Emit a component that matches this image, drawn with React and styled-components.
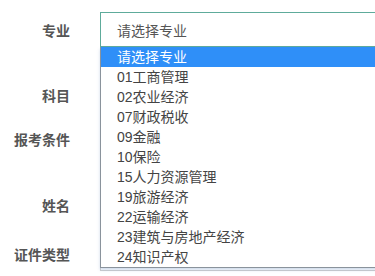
import styled, { createGlobalStyle } from "styled-components";

const GlobalStyle = createGlobalStyle`
  body {
    margin: 0;
    background: #fff;
    font-family: "Liberation Sans", "Noto Sans CJK SC", sans-serif;
  }
`;

const Form = styled.div`
  position: relative;
  width: 375px;
  height: 276px;
  overflow: hidden;
  padding-top: 12px;
  box-sizing: border-box;
`;

const Row = styled.div`
  display: flex;
  align-items: center;
  height: 35px;
  margin-top: ${(p) => p.$gap || 0}px;
`;

const Label = styled.div`
  width: 70px;
  padding-right: 30px;
  text-align: right;
  font-size: 14px;
  font-weight: bold;
  color: #555;
  flex-shrink: 0;
`;

const Field = styled.div`
  position: relative;
  flex: 1;
  height: 35px;
`;

const SelectBox = styled.div`
  height: 35px;
  width: 300px;
  box-sizing: border-box;
  border: 1px solid #5eab9b;
  display: flex;
  align-items: center;
  padding-left: 16px;
  font-size: 14px;
  color: #555;
`;

const Input = styled.div`
  height: 35px;
  width: 300px;
  box-sizing: border-box;
  border: 1px solid #ccc;
`;

const Menu = styled.ul`
  position: absolute;
  top: 35px;
  left: 0;
  width: 300px;
  margin: 0;
  padding: 0;
  list-style: none;
  background: #fff;
  border: 1px solid #8a939c;
  border-top: none;
  box-shadow: 0 2px 3px rgba(150, 175, 210, 0.45);
  z-index: 2;
`;

const Option = styled.li`
  height: 20px;
  line-height: 20px;
  padding-left: 16px;
  font-size: 14px;
  color: ${(p) => (p.$active ? "#fff" : "#444")};
  background: ${(p) => (p.$active ? "#2f8ff8" : "transparent")};
  white-space: nowrap;
`;

const options = [
  "请选择专业",
  "01工商管理",
  "02农业经济",
  "07财政税收",
  "09金融",
  "10保险",
  "15人力资源管理",
  "19旅游经济",
  "22运输经济",
  "23建筑与房地产经济",
  "24知识产权",
];

export default function App() {
  return (
    <>
      <GlobalStyle />
      <Form>
        <Row>
          <Label>专业</Label>
          <Field>
            <SelectBox>请选择专业</SelectBox>
            <Menu>
              {options.map((o, i) => (
                <Option key={o} $active={i === 0}>
                  {o}
                </Option>
              ))}
            </Menu>
          </Field>
        </Row>
        <Row $gap={30}>
          <Label>科目</Label>
          <Field>
            <Input />
          </Field>
        </Row>
        <Row $gap={9}>
          <Label>报考条件</Label>
          <Field>
            <Input />
          </Field>
        </Row>
        <Row $gap={31}>
          <Label>姓名</Label>
          <Field>
            <Input />
          </Field>
        </Row>
        <Row $gap={14}>
          <Label>证件类型</Label>
          <Field>
            <Input />
          </Field>
        </Row>
      </Form>
    </>
  );
}
